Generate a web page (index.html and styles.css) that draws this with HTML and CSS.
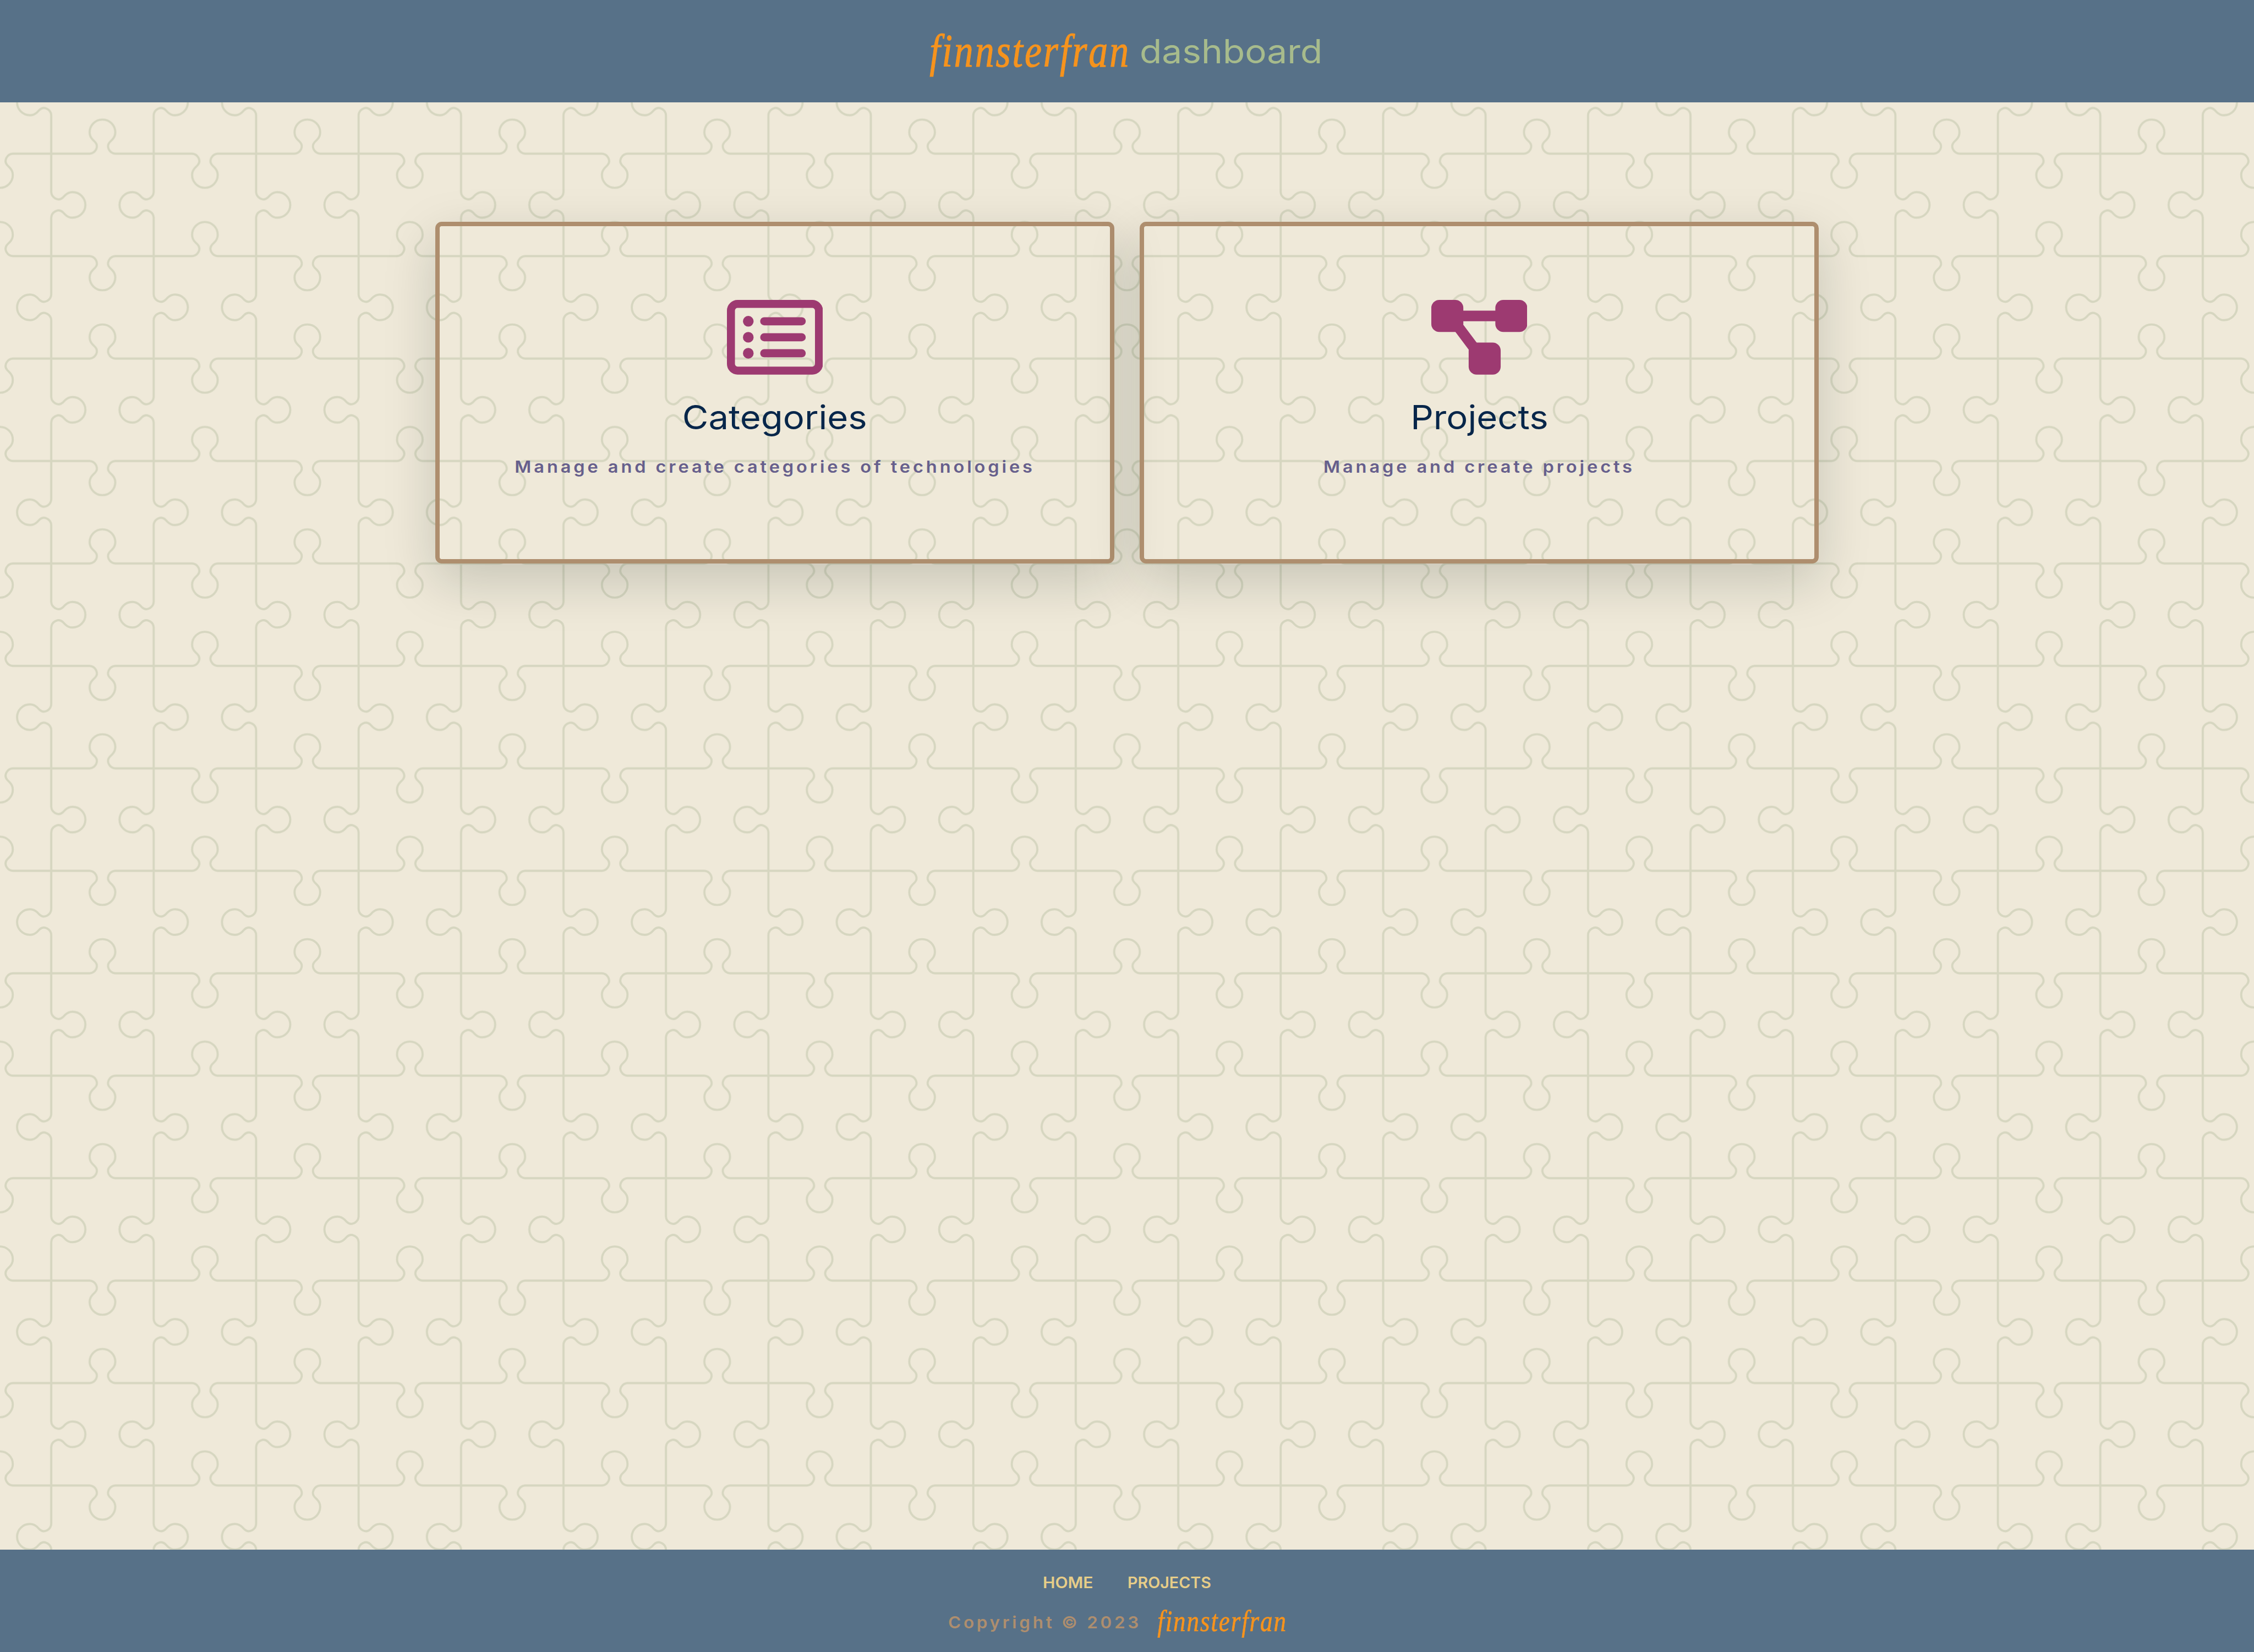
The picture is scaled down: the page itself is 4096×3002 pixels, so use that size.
FILE: index.html
```html
<!DOCTYPE html>
<html lang="en">
<head>
<meta charset="utf-8">
<title>finnsterfran dashboard</title>
<link rel="stylesheet" href="styles.css">
</head>
<body>
<svg class="backdrop" viewBox="0 0 2112 1548" preserveAspectRatio="none" aria-hidden="true">
  <defs>
    <path id="edge" d="M-48 0H-11.98a7.09 7.09 0 0 0 5.77-3.58l.43-.84a5.92 5.92 0 0 0-1.04-6.4l-2.36-2.36A12 10.5 0 0 1-12-20a12 12 0 1 1 24 0a12 10.5 0 0 1-2.82 6.82l-2.36 2.36a5.92 5.92 0 0 0-1.04 6.4l.43.84a7.09 7.09 0 0 0 5.77 3.58H48"/>
    <pattern id="jigsaw" width="192" height="192" patternUnits="userSpaceOnUse">
      <g fill="none" stroke="#d6d6c0" stroke-width="2">
        <use href="#edge" transform="translate(96 144)"/>
        <use href="#edge" transform="translate(0 144) scale(1 -1)"/>
        <use href="#edge" transform="translate(192 144) scale(1 -1)"/>
        <use href="#edge" transform="translate(96 48) scale(1 -1)"/>
        <use href="#edge" transform="translate(0 48)"/>
        <use href="#edge" transform="translate(192 48)"/>
        <use href="#edge" transform="translate(48 0) rotate(90)"/>
        <use href="#edge" transform="translate(48 192) rotate(90)"/>
        <use href="#edge" transform="translate(48 96) rotate(-90)"/>
        <use href="#edge" transform="translate(144 0) rotate(-90)"/>
        <use href="#edge" transform="translate(144 192) rotate(-90)"/>
        <use href="#edge" transform="translate(144 96) rotate(90)"/>
      </g>
    </pattern>
  </defs>
  <rect width="2112" height="1548" fill="url(#jigsaw)"/>
</svg>
<header class="header">
  <span class="logo">finnsterfran</span>
  <span class="header-title">dashboard</span>
</header>
<main class="main">
  <a class="card">
    <svg class="card-icon" viewBox="0 0 180 140">
      <rect x="7.5" y="7.5" width="165" height="125" rx="12.5" fill="none" stroke="currentColor" stroke-width="15"/>
      <g fill="currentColor">
        <circle cx="40" cy="40" r="10"/><circle cx="40" cy="70" r="10"/><circle cx="40" cy="100" r="10"/>
        <rect x="62.3" y="32.4" width="85.4" height="15.2" rx="7.6"/>
        <rect x="62.3" y="62.4" width="85.4" height="15.2" rx="7.6"/>
        <rect x="62.3" y="92.4" width="85.4" height="15.2" rx="7.6"/>
      </g>
    </svg>
    <h2 class="card-title">Categories</h2>
    <p class="card-text">Manage and create categories of technologies</p>
  </a>
  <a class="card">
    <svg class="card-icon" viewBox="0 0 180 140" fill="currentColor">
      <rect width="60" height="60" rx="15"/>
      <rect x="120" width="60" height="60" rx="15"/>
      <rect x="70" y="80" width="60" height="60" rx="15"/>
      <path d="M50 20h80v20H50zM40 53L55 40L90 86.700L75 99.700z"/>
    </svg>
    <h2 class="card-title">Projects</h2>
    <p class="card-text">Manage and create projects</p>
  </a>
</main>
<footer class="footer">
  <nav class="links"><a class="link link-home">HOME</a><a class="link link-projects">PROJECTS</a></nav>
  <div class="legal"><span class="copyright">Copyright © 2023</span><span class="logo logo-small">finnsterfran</span></div>
</footer>
</body>
</html>
```
FILE: styles.css
```css
/* 1rem is 1/42.24 of the window's width */
html { font-size: calc(100vw / 42.24); }
* { box-sizing: border-box; margin: 0; padding: 0; }
body {
  display: flex;
  flex-direction: column;
  height: 100vh;
  overflow: hidden;
  background: #efe9d9;
  font-family: Inter, sans-serif;
  white-space: nowrap;
}
.backdrop { position: absolute; inset: 0; width: 100%; height: 100%; z-index: -1; }
.header {
  display: flex;
  align-items: center;
  height: 1.92rem;
  padding-left: 17.42rem;
  background: #577188;
}
.logo {
  width: 3.94rem;
  font-family: "Liberation Serif", serif;
  font-style: italic;
  font-size: .72rem;
  line-height: 1rem;
  letter-spacing: .042em;
  color: #f6931d;
  -webkit-text-stroke: .01rem #f6931d;
  transform: scaleY(1.2);
}
.header-title {
  font-size: .62rem;
  color: #a7bb8c;
  transform: scaleX(1.095);
  transform-origin: left;
}
.main {
  flex: 1;
  display: flex;
  justify-content: center;
  align-items: flex-start;
  gap: .48rem;
  padding-top: 2.24rem;
}
.card {
  display: flex;
  flex-direction: column;
  align-items: center;
  width: 12.72rem;
  height: 6.4rem;
  padding-top: 1.38rem;
  border: 8px solid #ae8e6e;
  border-radius: .12rem;
  box-shadow: 0 .32rem .96rem rgba(10, 30, 20, .175);
}
.card-icon { width: 1.8rem; height: 1.4rem; color: #9d3a71; }
.card-title {
  margin-top: .4rem;
  font-size: .62rem;
  font-weight: 400;
  line-height: .8rem;
  color: #07264a;
  transform: scaleX(1.085);
}
.card-text {
  margin-top: .29rem;
  font-size: .31rem;
  font-weight: 600;
  line-height: .48rem;
  letter-spacing: .15em;
  color: #665f8c;
  transform: scaleX(1.084);
}
.footer { height: 1.92rem; padding-top: .38rem; background: #577188; }
.links, .legal { display: flex; line-height: .48rem; }
.links { padding-left: 19.54rem; }
.link { font-size: .29rem; font-weight: 600; color: #e6cd88; transform-origin: left; }
.link-home { width: 1.59rem; transform: scaleX(1.07); }
.link-projects { transform: scaleX(1.02); }
.legal { margin-top: .27rem; padding-left: 17.77rem; }
.copyright {
  width: 3.92rem;
  font-size: .31rem;
  font-weight: 600;
  letter-spacing: .15em;
  color: #ae8e6e;
  transform: scaleX(1.047);
  transform-origin: left;
}
.logo-small {
  width: auto;
  font-size: .465rem;
  line-height: .44rem;
  -webkit-text-stroke-width: .006rem;
}
```
